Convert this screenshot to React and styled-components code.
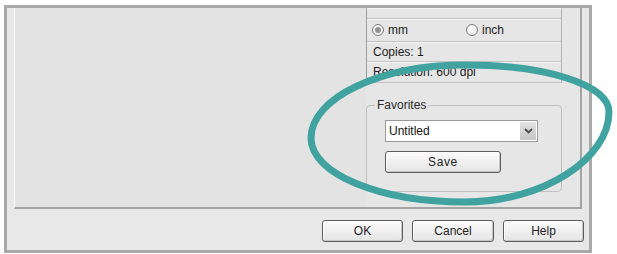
import React from "react";
import styled, { createGlobalStyle } from "styled-components";

const GlobalStyle = createGlobalStyle`
  body {
    margin: 0;
    background: #ffffff;
    font-family: "Liberation Sans", Arial, sans-serif;
  }
`;

const Stage = styled.div`
  position: relative;
  width: 617px;
  height: 254px;
  padding: 5px 0 0 4px;
  box-sizing: border-box;
`;

const Frame = styled.div`
  width: 588px;
  height: 248px;
  box-sizing: border-box;
  border: 3px solid #a9a9a9;
  background: #e8e8e8;
  padding: 0 7px;
  display: flex;
  flex-direction: column;
`;

const Panel = styled.div`
  height: 201px;
  box-sizing: border-box;
  display: flex;
  border-left: 1px solid #ffffff;
  border-right: 2px solid #a4a4a4;
  border-bottom: 2px solid #a4a4a4;
  background: #e6e6e6;
`;

const Preview = styled.div`
  flex: 0 0 351px;
  background: #e3e3e3;
`;

const SidePane = styled.div`
  flex: 0 0 196px;
  display: flex;
  flex-direction: column;
`;

const List = styled.div`
  display: flex;
  flex-direction: column;
  border-left: 1px solid #9e9e9e;
  border-right: 1px solid #b4b4b4;
`;

const Row = styled.div`
  height: ${(p) => p.h}px;
  display: flex;
  align-items: center;
  padding-left: ${(p) => p.pad ?? 5}px;
  border-bottom: 1px solid #c2c2c2;
  box-shadow: inset 0 1px 0 #f6f6f6;
  font-size: 12px;
  color: #1c1c1c;
`;

const RadioOption = styled.label`
  display: flex;
  align-items: center;
  gap: 4px;
  width: ${(p) => p.w || "auto"};
  font-size: 12px;
  color: #1c1c1c;
`;

const RadioDot = styled.span`
  width: 12px;
  height: 12px;
  box-sizing: border-box;
  border-radius: 50%;
  border: 1px solid #7d7d7d;
  background: radial-gradient(circle at 40% 35%, #ffffff, #e4e4e4);
  display: flex;
  align-items: center;
  justify-content: center;
  &::after {
    content: "";
    width: 6px;
    height: 6px;
    border-radius: 50%;
    background: ${(p) => (p.checked ? "#8f9692" : "transparent")};
  }
`;

const Group = styled.fieldset`
  margin: 15px 0 0 0;
  height: 94px;
  box-sizing: border-box;
  padding: 0 0 0 8px;
  border: 1px solid #c0c0c0;
  border-radius: 4px;
  min-width: 0;
`;

const Legend = styled.legend`
  padding: 0 2px;
  font-size: 12px;
  line-height: 14px;
  color: #2a2a2a;
`;

const GroupBody = styled.div`
  padding: 8px 0 0 10px;
  display: flex;
  flex-direction: column;
  gap: 9px;
`;

const Select = styled.div`
  width: 153px;
  height: 22px;
  box-sizing: border-box;
  border: 1px solid #9a9a9a;
  background: #ffffff;
  display: flex;
  align-items: center;
  justify-content: space-between;
  padding: 1px 1px 1px 3px;
  font-size: 12px;
  color: #111;
`;

const ArrowBox = styled.span`
  width: 16px;
  height: 18px;
  background: linear-gradient(#e2e2e2, #c6c6c6);
  display: flex;
  align-items: center;
  justify-content: center;
`;

const Button = styled.button`
  width: ${(p) => p.w}px;
  height: 22px;
  box-sizing: border-box;
  padding: 0;
  border: 1px solid #5c5c5c;
  border-radius: 3px;
  background: linear-gradient(#fcfcfc, #e4e4e4);
  box-shadow: inset -1px -1px 0 #c8c8c8, inset 1px 1px 0 #ffffff;
  font-family: "Liberation Sans", Arial, sans-serif;
  font-size: 12px;
  color: #222;
  letter-spacing: ${(p) => (p.spaced ? "0.6px" : "0")};
`;

const ButtonRow = styled.div`
  display: flex;
  justify-content: flex-end;
  gap: 9px;
  padding-top: 11px;
  margin-right: -2px;
`;

const Callout = styled.svg`
  position: absolute;
  left: 0;
  top: 0;
  pointer-events: none;
`;

export default function App() {
  return (
    <>
      <GlobalStyle />
      <Stage>
        <Frame>
          <Panel>
            <Preview />
            <SidePane>
              <List>
                <Row h={10} />
                <Row h={22}>
                  <RadioOption w="94px">
                    <RadioDot checked />
                    mm
                  </RadioOption>
                  <RadioOption>
                    <RadioDot />
                    inch
                  </RadioOption>
                </Row>
                <Row h={19} pad={6}>Copies: 1</Row>
                <Row h={20} pad={6}>Resolution: 600 dpi</Row>
              </List>
              <Group>
                <Legend>Favorites</Legend>
                <GroupBody>
                  <Select>
                    Untitled
                    <ArrowBox>
                      <svg width="9" height="6" viewBox="0 0 9 6">
                        <path d="M1 1 L4.5 4.5 L8 1" fill="none" stroke="#4a4a4a" strokeWidth="1.8" />
                      </svg>
                    </ArrowBox>
                  </Select>
                  <Button w={116} spaced>Save</Button>
                </GroupBody>
              </Group>
            </SidePane>
          </Panel>
          <ButtonRow>
            <Button w={81}>OK</Button>
            <Button w={82}>Cancel</Button>
            <Button w={81}>Help</Button>
          </ButtonRow>
        </Frame>
        <Callout width="617" height="254" viewBox="0 0 617 254">
          <path
            d="M465 65 C544 65 609 84 609 112 C609 158 544 202 465 202 C380 202 311 174 311 138 C311 98 380 65 465 65 Z"
            fill="none"
            stroke="#41a3a0"
            strokeWidth="7"
          />
        </Callout>
      </Stage>
    </>
  );
}
